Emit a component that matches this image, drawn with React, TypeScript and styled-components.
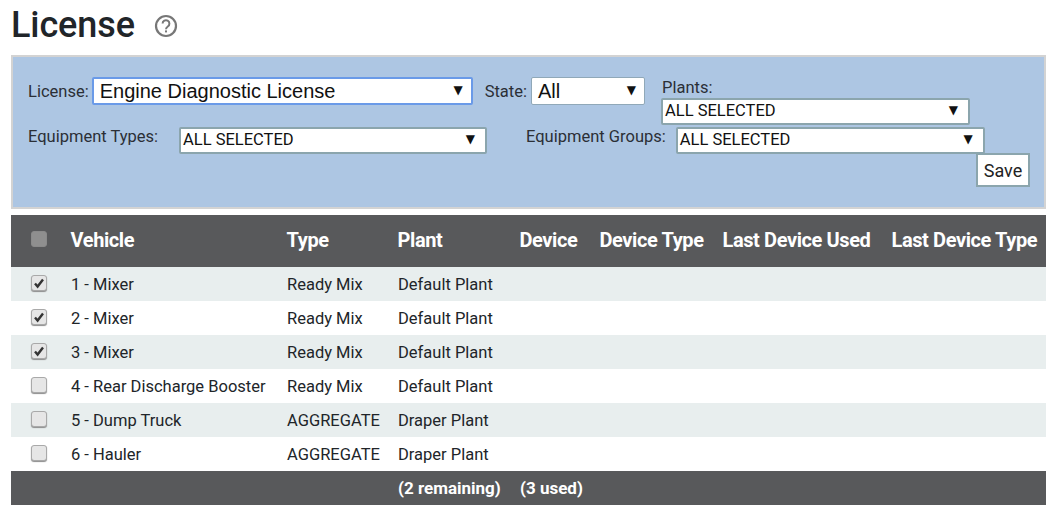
import React from 'react';
import styled, { createGlobalStyle } from 'styled-components';

const GlobalStyle = createGlobalStyle`
  html, body {
    margin: 0;
    padding: 0;
    background: #fff;
    font-family: Roboto, "Liberation Sans", sans-serif;
    color: #212529;
  }
`;

const Page = styled.div`
  width: 1054px;
  height: 517px;
  padding: 0 8px 0 11px;
  box-sizing: border-box;
  overflow: hidden;
`;

const TitleRow = styled.div`
  display: flex;
  align-items: center;
  height: 55px;
  padding-bottom: 5px;
  box-sizing: border-box;
`;

const Title = styled.h1`
  margin: 0;
  font-size: 36px;
  font-weight: 500;
  line-height: 50px;
  letter-spacing: -0.1px;
  color: #212529;
`;

const HelpIcon = styled.svg`
  width: 24px;
  height: 24px;
  margin-left: 19px;
  margin-top: 2px;
`;

const FilterPanel = styled.div`
  height: 154px;
  box-sizing: border-box;
  border: 2px solid #d3d3d3;
  background: #adc6e3;
  padding: 20px 0 0 15px;
  font-size: 16.5px;
`;

const FilterRow = styled.div`
  display: flex;
  align-items: flex-start;
`;

const FirstRow = styled(FilterRow)`
  height: 50px;
`;

const Label = styled.span<{ $w?: number; $top?: number; $left?: number }>`
  display: block;
  white-space: nowrap;
  line-height: 20px;
  color: #2b2f36;
  width: ${(p) => (p.$w ? `${p.$w}px` : 'auto')};
  margin-top: ${(p) => p.$top ?? 0}px;
  margin-left: ${(p) => p.$left ?? 0}px;
`;

const Select = styled.div<{ $w: number; $big?: boolean; $focus?: boolean; $left?: number }>`
  display: flex;
  align-items: center;
  justify-content: space-between;
  box-sizing: border-box;
  width: ${(p) => p.$w}px;
  height: ${(p) => (p.$big ? 28 : 27)}px;
  margin-left: ${(p) => p.$left ?? 0}px;
  background: #fff;
  border-radius: 2px;
  border: ${(p) => (p.$focus ? '2px solid #6a9ae8' : p.$big ? '1px solid #90a8b8' : '2px solid #8ba5ad')};
  padding: ${(p) => (p.$big ? '0 8px 0 6px' : '0 10px 2px 2px')};
  font-size: ${(p) => (p.$big ? 20 : 16.5)}px;
  font-family: ${(p) => (p.$big ? '"Liberation Sans", Arial, sans-serif' : 'Roboto, sans-serif')};
  color: #111;
  white-space: nowrap;
`;

const Arrow = styled.span`
  font-family: "DejaVu Sans", sans-serif;
  font-size: 12px;
  line-height: 1;
  color: #111;
  margin-top: -2px;
`;

const PlantsColumn = styled.div`
  display: flex;
  flex-direction: column;
  margin-left: 16px;
  margin-top: 2px;
`;

const PlantsLabel = styled.span`
  line-height: 18px;
  margin-left: 1px;
  margin-bottom: 1px;
  color: #2b2f36;
`;

const SaveRow = styled.div`
  display: flex;
  justify-content: flex-end;
  padding-right: 14px;
  margin-top: -1px;
`;

const SaveButton = styled.button`
  width: 54px;
  height: 34px;
  box-sizing: border-box;
  background: #fff;
  border: 2px solid #8ba5ad;
  border-radius: 0;
  padding: 0;
  font-family: Roboto, sans-serif;
  font-size: 18px;
  color: #222;
`;

const Table = styled.table`
  width: 1035px;
  margin-top: 6px;
  border-collapse: collapse;
  table-layout: fixed;
  font-size: 16.5px;
`;

const HeadRow = styled.tr`
  background: #58595b;
  height: 52px;
`;

const HeadCell = styled.th`
  padding: 0 0 2px 0;
  text-align: left;
  text-indent: -0.5px;
  font-size: 20px;
  font-weight: 700;
  letter-spacing: -0.4px;
  color: #fff;
  white-space: nowrap;
  overflow: visible;
`;

const BodyRow = styled.tr`
  height: 34px;
  background: #fff;
  &:nth-child(odd) {
    background: #e8eeee;
  }
`;

const BodyCell = styled.td`
  padding: 0;
  color: #212529;
  white-space: nowrap;
`;

const CheckCell = styled.td`
  padding: 0 0 0 20px;
`;

const HeadCheckCell = styled.th`
  padding: 0 0 0 20px;
  text-align: left;
`;

const CheckBox = styled.span<{ $muted?: boolean }>`
  display: flex;
  align-items: center;
  justify-content: center;
  box-sizing: border-box;
  width: 16px;
  height: 16px;
  margin-top: ${(p) => (p.$muted ? -4 : -2)}px;
  border-radius: 3px;
  border: 1px solid ${(p) => (p.$muted ? '#8a8a8a' : '#a9a9a9')};
  background: ${(p) => (p.$muted ? '#8f8f8f' : '#e6e6e6')};
  box-shadow: ${(p) => (p.$muted ? 'none' : '0 1px 1px #8c8c8c')};
`;

const FootRow = styled.tr`
  background: #58595b;
  height: 34px;
`;

const FootCell = styled.td`
  padding: 0;
  color: #fff;
  font-size: 17px;
  font-weight: 700;
  white-space: nowrap;
`;

const vehicles = [
  { name: '1 - Mixer', type: 'Ready Mix', plant: 'Default Plant', checked: true },
  { name: '2 - Mixer', type: 'Ready Mix', plant: 'Default Plant', checked: true },
  { name: '3 - Mixer', type: 'Ready Mix', plant: 'Default Plant', checked: true },
  { name: '4 - Rear Discharge Booster', type: 'Ready Mix', plant: 'Default Plant', checked: false },
  { name: '5 - Dump Truck', type: 'AGGREGATE', plant: 'Draper Plant', checked: false },
  { name: '6 - Hauler', type: 'AGGREGATE', plant: 'Draper Plant', checked: false },
];

const columns = [60, 216, 111, 122, 80, 123, 169, 154];

const App: React.FC = () => {
  return (
    <Page>
      <GlobalStyle />
      <TitleRow>
        <Title>License</Title>
        <HelpIcon viewBox="0 0 24 24" fill="none">
          <circle cx="12" cy="12" r="10" stroke="#777" strokeWidth="2.2" />
          <path d="M8.6 9.6a3.4 3.4 0 1 1 5.2 2.9c-1.2.8-1.8 1.3-1.8 2.7" stroke="#777" strokeWidth="2" />
          <rect x="11" y="16.4" width="2" height="2" fill="#777" />
        </HelpIcon>
      </TitleRow>

      <FilterPanel>
        <FirstRow>
          <Label $top={5}>License:</Label>
          <Select $w={381} $big $focus $left={3}>
            Engine Diagnostic License
            <Arrow>▼</Arrow>
          </Select>
          <Label $top={5} $left={12}>State:</Label>
          <Select $w={114} $big $left={4}>
            All
            <Arrow>▼</Arrow>
          </Select>
          <PlantsColumn>
            <PlantsLabel>Plants:</PlantsLabel>
            <Select $w={309}>
              ALL SELECTED
              <Arrow>▼</Arrow>
            </Select>
          </PlantsColumn>
        </FirstRow>
        <FilterRow>
          <Label $w={151}>Equipment Types:</Label>
          <Select $w={308}>
            ALL SELECTED
            <Arrow>▼</Arrow>
          </Select>
          <Label $left={39}>Equipment Groups:</Label>
          <Select $w={309} $left={10}>
            ALL SELECTED
            <Arrow>▼</Arrow>
          </Select>
        </FilterRow>
        <SaveRow>
          <SaveButton>Save</SaveButton>
        </SaveRow>
      </FilterPanel>

      <Table>
        <colgroup>
          {columns.map((w, i) => (
            <col key={i} style={{ width: w }} />
          ))}
        </colgroup>
        <thead>
          <HeadRow>
            <HeadCheckCell>
              <CheckBox $muted />
            </HeadCheckCell>
            <HeadCell>Vehicle</HeadCell>
            <HeadCell>Type</HeadCell>
            <HeadCell>Plant</HeadCell>
            <HeadCell>Device</HeadCell>
            <HeadCell>Device Type</HeadCell>
            <HeadCell>Last Device Used</HeadCell>
            <HeadCell>Last Device Type</HeadCell>
          </HeadRow>
        </thead>
        <tbody>
          {vehicles.map((v) => (
            <BodyRow key={v.name}>
              <CheckCell>
                <CheckBox>
                  {v.checked && (
                    <svg width="12" height="12" viewBox="0 0 12 12">
                      <path d="M2 6.5 4.6 9.5 10 2.5" fill="none" stroke="#333" strokeWidth="2.4" />
                    </svg>
                  )}
                </CheckBox>
              </CheckCell>
              <BodyCell>{v.name}</BodyCell>
              <BodyCell>{v.type}</BodyCell>
              <BodyCell>{v.plant}</BodyCell>
              <BodyCell />
              <BodyCell />
              <BodyCell />
              <BodyCell />
            </BodyRow>
          ))}
        </tbody>
        <tfoot>
          <FootRow>
            <FootCell />
            <FootCell />
            <FootCell />
            <FootCell>(2 remaining)</FootCell>
            <FootCell>(3 used)</FootCell>
            <FootCell />
            <FootCell />
            <FootCell />
          </FootRow>
        </tfoot>
      </Table>
    </Page>
  );
};

export default App;
